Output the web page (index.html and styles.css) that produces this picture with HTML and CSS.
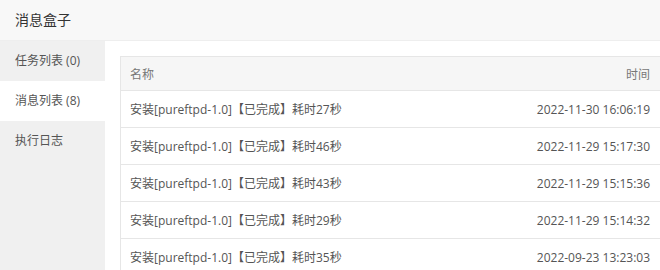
FILE: index.html
```html
<!DOCTYPE html>
<html lang="zh-CN">
<head>
<meta charset="utf-8">
<title>消息盒子</title>
<link rel="stylesheet" href="styles.css">
</head>
<body>
<div class="box">
  <div class="title">消息盒子</div>
  <div class="body">
    <ul class="side">
      <li class="tab">任务列表 (0)</li>
      <li class="tab active">消息列表 (8)</li>
      <li class="tab">执行日志</li>
    </ul>
    <div class="main">
      <table class="tbl">
        <thead>
          <tr><th class="name">名称</th><th class="time">时间</th></tr>
        </thead>
        <tbody>
          <tr><td class="name">安装[pureftpd-1.0]【已完成】耗时27秒</td><td class="time">2022-11-30 16:06:19</td></tr>
          <tr><td class="name">安装[pureftpd-1.0]【已完成】耗时46秒</td><td class="time">2022-11-29 15:17:30</td></tr>
          <tr><td class="name">安装[pureftpd-1.0]【已完成】耗时43秒</td><td class="time">2022-11-29 15:15:36</td></tr>
          <tr><td class="name">安装[pureftpd-1.0]【已完成】耗时29秒</td><td class="time">2022-11-29 15:14:32</td></tr>
          <tr><td class="name">安装[pureftpd-1.0]【已完成】耗时35秒</td><td class="time">2022-09-23 13:23:03</td></tr>
        </tbody>
      </table>
    </div>
  </div>
</div>
</body>
</html>
```
FILE: styles.css
```css
* { box-sizing: border-box; }
html, body { margin: 0; padding: 0; }
body {
  width: 660px;
  height: 270px;
  overflow: hidden;
  background: #fff;
  font-family: "Open Sans", "Noto Sans CJK SC", sans-serif;
  font-size: 12px;
  color: #555;
}
.box { display: flex; flex-direction: column; height: 270px; }
.title {
  height: 41px;
  line-height: 40px;
  padding-left: 15px;
  font-size: 14px;
  color: #333;
  background: #f8f8f8;
  border-bottom: 1px solid #eee;
}
.body { flex: 1; display: flex; min-height: 0; }
.side {
  width: 105px;
  margin: 0;
  padding: 0;
  list-style: none;
  background: #f0f0f0;
}
.tab {
  height: 40px;
  line-height: 40px;
  padding-left: 15px;
  color: #555;
}
.tab.active { background: #fff; }
.main { flex: 1; padding: 15px 0 0 15px; overflow: hidden; }
.tbl {
  width: calc(100% + 1px);
  border-collapse: collapse;
  border: 1px solid #e6e6e6;
}
.tbl th, .tbl td {
  border-bottom: 1px solid #e6e6e6;
  padding: 0 10px 0 9px;
  font-weight: normal;
  white-space: nowrap;
}
.tbl th { height: 34px; background: #f6f6f6; color: #777; }
.tbl td { height: 37px; color: #555; }
.tbl .name { text-align: left; }
.tbl .time { text-align: right; }
```
